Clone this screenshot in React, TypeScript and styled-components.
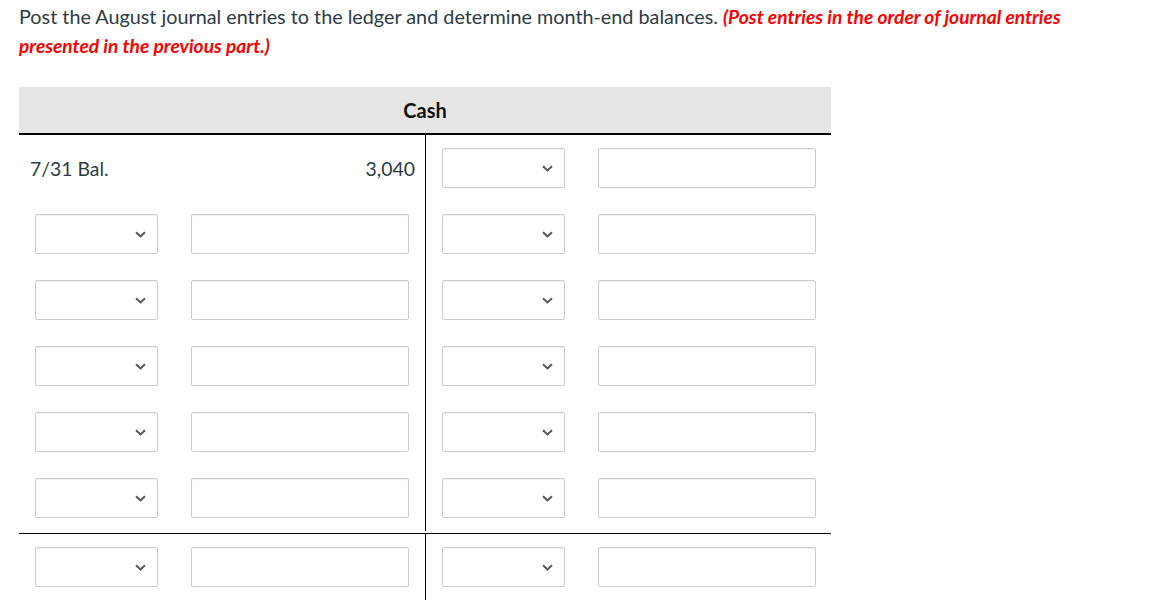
import React from "react";
import styled, { createGlobalStyle } from "styled-components";

const GlobalStyle = createGlobalStyle`
  html, body {
    margin: 0;
    padding: 0;
    background: #fff;
  }
  body {
    font-family: Lato, "Liberation Sans", Arial, sans-serif;
    color: #333;
  }
`;

const Chevron = () => (
  <ChevronIcon width="11" height="7" viewBox="0 0 11 7">
    <path d="M1 1.2 L5.5 5.4 L10 1.2" fill="none" stroke="#555" strokeWidth="2" />
  </ChevronIcon>
);

const Dropdown: React.FC = () => (
  <SelectWrap>
    <Select defaultValue="">
      <option value="" />
    </Select>
    <Chevron />
  </SelectWrap>
);

const EntryCell: React.FC = () => (
  <EntryRow>
    <Dropdown />
    <AmountInput type="text" />
  </EntryRow>
);

export default function App() {
  const rows = [1, 2, 3, 4, 5];

  return (
    <Page>
      <GlobalStyle />
      <Instructions>
        Post the August journal entries to the ledger and determine month-end balances.{" "}
        <Emphasis>(Post entries in the order of journal entries presented in the previous part.)</Emphasis>
      </Instructions>

      <Ledger>
        <LedgerHeader>Cash</LedgerHeader>
        <LedgerBody>
          <Column $side="left">
            <BalanceRow>
              <span>7/31 Bal.</span>
              <span>3,040</span>
            </BalanceRow>
            {rows.map((r) => (
              <EntryCell key={r} />
            ))}
          </Column>
          <Column $side="right">
            <EntryCell />
            {rows.map((r) => (
              <EntryCell key={r} />
            ))}
          </Column>
        </LedgerBody>
        <TotalBody>
          <Column $side="left">
            <EntryCell />
          </Column>
          <Column $side="right">
            <EntryCell />
          </Column>
        </TotalBody>
      </Ledger>
    </Page>
  );
}

// Styled components

const Page = styled.div`
  padding: 2px 19px 0;
`;

const Instructions = styled.p`
  margin: 0;
  width: 1110px;
  font-size: 19.8px;
  line-height: 28px;
  color: #2d3b45;
`;

const Emphasis = styled.strong`
  color: #f00;
  font-style: italic;
  font-weight: 700;
  font-size: 19.2px;
`;

const Ledger = styled.div`
  width: 812px;
  margin-top: 27px;
`;

const LedgerHeader = styled.div`
  height: 46px;
  background: #e5e5e5;
  border-bottom: 2px solid #000;
  display: flex;
  align-items: center;
  justify-content: center;
  font-size: 20px;
  font-weight: 700;
  color: #111;
`;

const LedgerBody = styled.div`
  display: grid;
  grid-template-columns: 407px 405px;
  border-bottom: 1px solid #000;
  padding-bottom: 2px;
`;

const TotalBody = styled.div`
  display: grid;
  grid-template-columns: 407px 405px;
`;

const Column = styled.div<{ $side: "left" | "right" }>`
  display: flex;
  flex-direction: column;
  border-right: ${(p) => (p.$side === "left" ? "1px solid #000" : "none")};
`;

const BalanceRow = styled.div`
  height: 66px;
  padding: 0 10px 0 11px;
  display: flex;
  align-items: center;
  justify-content: space-between;
  font-size: 19.4px;
  color: #2d3b45;
`;

const EntryRow = styled.div`
  height: 66px;
  padding: 13px 0 13px 16px;
  box-sizing: border-box;
  display: flex;
  align-items: flex-start;
  gap: 33px;
`;

const SelectWrap = styled.div`
  position: relative;
  width: 123px;
  height: 40px;
`;

const Select = styled.select`
  appearance: none;
  width: 100%;
  height: 100%;
  box-sizing: border-box;
  border: 1px solid #ccc;
  border-radius: 2px;
  background: #fff;
  box-shadow: inset 0 1px 1px rgba(0, 0, 0, 0.06);
  font-family: inherit;
  font-size: 16px;
  outline: none;
`;

const ChevronIcon = styled.svg`
  position: absolute;
  right: 12px;
  top: 17px;
  pointer-events: none;
`;

const AmountInput = styled.input`
  width: 218px;
  height: 40px;
  box-sizing: border-box;
  border: 1px solid #ccc;
  border-radius: 2px;
  background: #fff;
  box-shadow: inset 0 1px 1px rgba(0, 0, 0, 0.06);
  font-family: inherit;
  font-size: 16px;
  padding: 0 8px;
  outline: none;
`;
